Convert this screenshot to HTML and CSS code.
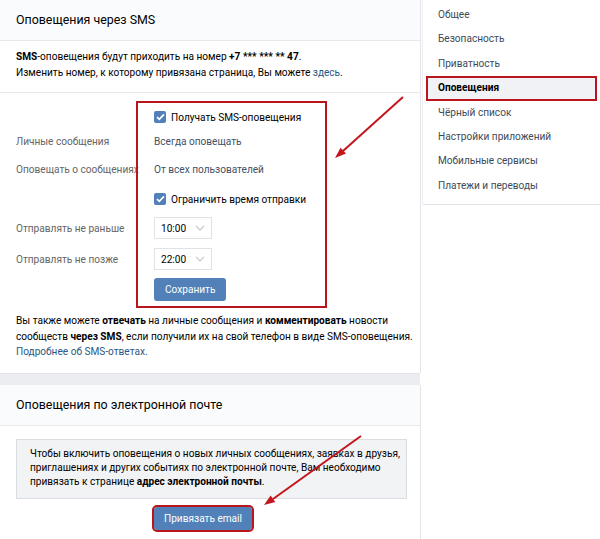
FILE: index.html
```html
<!DOCTYPE html>
<html lang="ru">
<head>
  <meta charset="UTF-8" />
  <title>Настройки — Оповещения</title>
  <link rel="stylesheet" href="styles.css">
</head>
<body>
<div class="page">

  <div class="main">
    <div class="panel">
      <div class="panel-head">Оповещения через SMS</div>
      <div class="intro">
        <b>SMS</b>-оповещения будут приходить на номер <b>+7 *** *** ** 47</b>.<br>
        Изменить номер, к которому привязана страница, Вы можете <a href="#">здесь</a>.
      </div>

      <div class="settings">
        <div class="row r1">
          <span class="label"></span>
          <span class="check"><span class="box"><svg width="9" height="8" viewBox="0 0 9 8"><path d="M1 4.2 3.3 6.4 8 1.3" fill="none" stroke="#fff" stroke-width="1.7"/></svg></span>Получать SMS-оповещения</span>
        </div>
        <div class="row r2">
          <span class="label">Личные сообщения</span>
          <span class="value">Всегда оповещать</span>
        </div>
        <div class="row r3">
          <span class="label">Оповещать о сообщениях</span>
          <span class="value">От всех пользователей</span>
        </div>
        <div class="row r4">
          <span class="label"></span>
          <span class="check"><span class="box"><svg width="9" height="8" viewBox="0 0 9 8"><path d="M1 4.2 3.3 6.4 8 1.3" fill="none" stroke="#fff" stroke-width="1.7"/></svg></span>Ограничить время отправки</span>
        </div>
        <div class="row r5">
          <span class="label">Отправлять не раньше</span>
          <span class="select">10:00<svg width="10" height="6" viewBox="0 0 10 6"><path d="M1 1 5 5 9 1" fill="none" stroke="#c5cbd3" stroke-width="1.2"/></svg></span>
        </div>
        <div class="row r6">
          <span class="label">Отправлять не позже</span>
          <span class="select">22:00<svg width="10" height="6" viewBox="0 0 10 6"><path d="M1 1 5 5 9 1" fill="none" stroke="#c5cbd3" stroke-width="1.2"/></svg></span>
        </div>
        <div class="row r7">
          <span class="label"></span>
          <button class="btn">Сохранить</button>
        </div>
        <div class="mark"></div>
      </div>

      <p class="note">
        Вы также можете <b>отвечать</b> на личные сообщения и <b>комментировать</b> новости<br>
        сообществ <b>через SMS</b>, если получили их на свой телефон в виде SMS-оповещения.<br>
        <a href="#">Подробнее об SMS-ответах.</a>
      </p>
    </div>

    <div class="panel email">
      <div class="panel-head">Оповещения по электронной почте</div>
      <div class="info">
        Чтобы включить оповещения о новых личных сообщениях, заявках в друзья,<br>
        приглашениях и других событиях по электронной почте, Вам необходимо<br>
        привязать к странице <b>адрес электронной почты</b>.
      </div>
      <div class="email-action">
        <button class="btn marked">Привязать email</button>
      </div>
    </div>
  </div>

  <div class="menu">
    <a class="menu-item" href="#">Общее</a>
    <a class="menu-item" href="#">Безопасность</a>
    <a class="menu-item" href="#">Приватность</a>
    <a class="menu-item active" href="#">Оповещения</a>
    <a class="menu-item" href="#">Чёрный список</a>
    <a class="menu-item" href="#">Настройки приложений</a>
    <a class="menu-item" href="#">Мобильные сервисы</a>
    <a class="menu-item" href="#">Платежи и переводы</a>
  </div>

  <!-- стрелки-пометки поверх страницы -->
  <svg class="arrows" width="600" height="539" viewBox="0 0 600 539">
    <g stroke="#c3161d" stroke-width="2" fill="#c3161d">
      <line x1="403" y1="97" x2="343" y2="151" />
      <polygon points="335,158 346,153.6 340.5,147.7" stroke="none" />
      <line x1="361" y1="436" x2="273" y2="499" />
      <polygon points="264,505 275.3,501.9 270.6,495.4" stroke="none" />
    </g>
  </svg>

</div>
</body>
</html>
```

FILE: styles.css
```css
body {
  margin: 0;
  background: #fff;
  font-family: Roboto, "Open Sans", "Noto Sans", sans-serif;
  font-size: 10.1px;
  color: #000;
}
a {
  color: #2a5885;
  text-decoration: none;
}
.page {
  position: relative;
  display: flex;
  align-items: flex-start;
  width: 600px;
  height: 539px;
  overflow: hidden;
}

/* левая колонка */
.main {
  width: 420px;
  display: flex;
  flex-direction: column;
  gap: 12px;
  background: #ebedf0;
}
.panel {
  background: #fff;
  box-shadow: 1px 0 0 #e3e5e8, 0 1px 0 #dfe2e6;
}
.panel-head {
  height: 40px;
  line-height: 40px;
  padding: 0 16px;
  font-size: 12.4px;
  background: #fafbfc;
  border-bottom: 1px solid #e7e8ec;
}
.intro {
  padding: 8px 16px 11px;
  line-height: 16px;
  border-bottom: 1px solid #e7e8ec;
}

.settings {
  position: relative;
  padding: 12px 16px 0;
}
.row {
  display: grid;
  grid-template-columns: 138px auto;
  align-items: center;
  height: 24px;
}
.r3 { margin-top: 4px; }
.r4 { margin-top: 6px; }
.r5 { margin-top: 6px; height: 22px; }
.r6 { margin-top: 9px; height: 22px; }
.r7 { margin-top: 8px; height: 23px; }
.label {
  color: #656565;
  white-space: nowrap;
}
.value {
  color: #3f5168;
}
.check {
  display: flex;
  align-items: center;
  gap: 5px;
}
.box {
  width: 12px;
  height: 12px;
  border-radius: 2px;
  background: #5181b8;
  display: flex;
  align-items: center;
  justify-content: center;
}
.select {
  width: 58px;
  height: 22px;
  box-sizing: border-box;
  border: 1px solid #dfe2e6;
  padding: 0 6px;
  display: flex;
  align-items: center;
  justify-content: space-between;
}
.btn {
  height: 23px;
  padding: 0 11px;
  border: none;
  border-radius: 3px;
  background: #5181b8;
  color: #fff;
  font-family: inherit;
  font-size: 10.1px;
  justify-self: start;
}
.mark {
  position: absolute;
  left: 136px;
  top: 8px;
  width: 187px;
  height: 203px;
  border: 2px solid #b8161c;
}
.note {
  margin: 0;
  padding: 12px 16px 13px;
  line-height: 15.5px;
  white-space: nowrap;
}

.email {
  height: 160px;
}
.info {
  margin: 13px 13px 0 16px;
  padding: 7px 13px 9px;
  line-height: 14px;
  white-space: nowrap;
  background: #f2f3f5;
  border: 1px solid #dadde2;
}
.email-action {
  padding: 8px 0 0 154px;
}
.marked {
  padding: 0 10px;
  outline: 2px solid #b8161c;
  outline-offset: 0;
}

/* правое меню */
.menu {
  width: 177px;
  margin-left: 3px;
  padding: 3px 0 6px;
  background: #fff;
  box-shadow: 0 1px 0 #dfe2e6, -1px 0 0 #eceef1;
}
.menu-item {
  display: block;
  height: 24.4px;
  line-height: 24.4px;
  padding-left: 15px;
  color: #3d4a59;
}
.menu-item.active {
  margin: 0 3px;
  padding-left: 12px;
  background: #f0f2f5;
  color: #000;
  font-weight: bold;
  box-shadow: inset 0 0 0 2px #b8161c;
}

.arrows {
  position: absolute;
  left: 0;
  top: 0;
  pointer-events: none;
}
```
